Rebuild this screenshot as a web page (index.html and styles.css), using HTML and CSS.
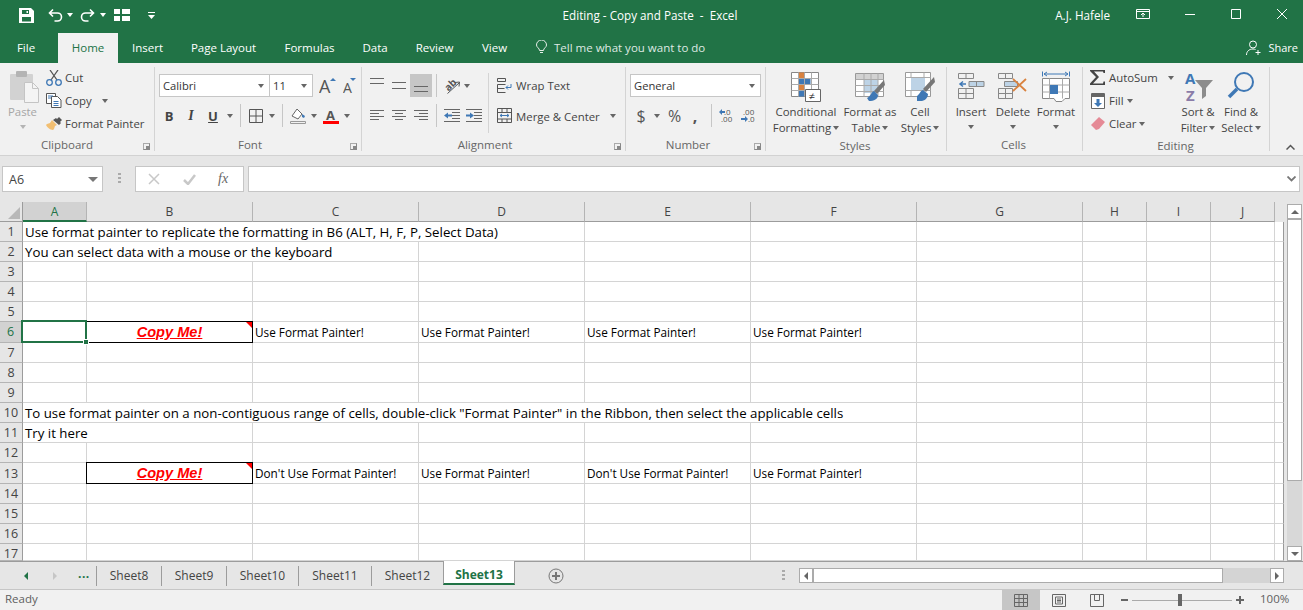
FILE: index.html
```html
<!DOCTYPE html>
<html lang="en">
<head>
<meta charset="utf-8">
<title>Editing - Copy and Paste - Excel</title>
<link rel="stylesheet" href="styles.css">
</head>
<body>
<div class="app">
  <header class="titlebar">
    <div class="qat">
      <svg class="m19" width="15" height="15" viewBox="0 0 15 15"><path d="M0 0h12l3 3v12H0z" fill="#fff"/><path d="M3 2h7v4H3zM3 9h9v4.500H3z" fill="#217346"/><path d="M7.500 3h1.500v2H7.500z" fill="#fff"/></svg>
      <svg class="m14" width="15" height="15" viewBox="0 0 15 15" fill="none" stroke="#fff" stroke-width="1.600"><path d="M5 1.500 1.500 5 5 8.500M2 5h7.500a3.800 3.800 0 0 1 0 8H6.500"/></svg>
      <span class="caret white m4"></span>
      <svg class="m7" width="15" height="15" viewBox="0 0 15 15" fill="none" stroke="#fff" stroke-width="1.600"><path d="M10 1.500 13.500 5 10 8.500M13 5H5.500a3.800 3.800 0 0 0 0 8H8.500"/></svg>
      <span class="caret white m5"></span>
      <svg class="m8" width="16" height="12" viewBox="0 0 16 12" fill="#fff"><path d="M0 0h6v5H0zM8 0h8v5H8zM0 7h6v5H0zM8 7h8v5H8z"/></svg>
      <svg class="m18" width="7" height="7" viewBox="0 0 7 7" fill="#fff"><path d="M0 0h7v1H0zM0 3h7L3.500 7z"/></svg>
    </div>
    <div class="doc-title">Editing - Copy and Paste&nbsp; -&nbsp; Excel</div>
    <div class="win">
      <span class="user">A.J. Hafele</span>
      <svg width="14" height="10" viewBox="0 0 14 10" fill="none" stroke="#fff"><path d="M.5.500h13v9H.5zM.5 2.500h13M7 8V4M5 6l2-2 2 2"/></svg>
      <svg class="m35" width="10" height="10" viewBox="0 0 10 10" stroke="#fff"><path d="M0 5.500h10"/></svg>
      <svg class="m36" width="10" height="10" viewBox="0 0 10 10" fill="none" stroke="#fff"><path d="M.5.500h9v9h-9z"/></svg>
      <svg class="m36" width="10" height="10" viewBox="0 0 10 10" fill="none" stroke="#fff"><path d="M0 0l10 10M10 0 0 10"/></svg>
    </div>
  </header>

  <nav class="tabs">
    <span class="tab file">File</span>
    <span class="tab home">Home</span>
    <span class="tab t-insert">Insert</span>
    <span class="tab t-gap t65">Page Layout</span>
    <span class="tab t-gap t49">Formulas</span>
    <span class="tab t-gap t24">Data</span>
    <span class="tab t-gap t37">Review</span>
    <span class="tab t-gap t25">View</span>
    <svg class="bulb" width="11" height="14" viewBox="0 0 11 14" fill="none" stroke="#e6efe9"><path d="M3.500 10.500C3.500 8 .5 7.500.5 5a5 5 0 0 1 10 0c0 2.500-3 3-3 5.500zM4 12.500h3"/></svg>
    <span class="tell">Tell me what you want to do</span>
    <span class="share">
      <svg width="16" height="16" viewBox="0 0 16 16" fill="none" stroke="#fff"><circle cx="7" cy="4.500" r="3.500"/><path d="M.5 15c0-3.500 2.500-6 6.500-6 1 0 1.800.2 2.500.5M12 10v5M9.500 12.500h5"/></svg>
      Share
    </span>
  </nav>

  <section class="ribbon">
    <div class="group g-clip">
      <div class="body">
        <div class="big paste">
          <svg width="29" height="33" viewBox="0 0 29 33"><rect x="0" y="4" width="23" height="26" rx="1" fill="#d2d2d2"/><rect x="6" y="1" width="11" height="6" rx="1" fill="#b4b4b4"/><path d="M14.500 12.500h8l6 6v14h-14z" fill="#f4f4f4" stroke="#c4c4c4"/><path d="M22.500 12.500v6h6" fill="none" stroke="#c4c4c4"/></svg>
          <span class="lbl dim">Paste</span>
          <span class="caret dimc"></span>
        </div>
        <div class="smalls">
          <div class="small">
            <svg width="16" height="16" viewBox="0 0 16 16" fill="none"><path d="M4 0l7 10M12 0 5 10" stroke="#555" stroke-width="1.300"/><circle cx="3.500" cy="12.500" r="2.800" stroke="#3f78b5" stroke-width="1.300"/><circle cx="12.500" cy="12.500" r="2.800" stroke="#3f78b5" stroke-width="1.300"/></svg>
            <span>Cut</span>
          </div>
          <div class="small">
            <svg width="16" height="15" viewBox="0 0 16 15" fill="#fff" stroke="#555"><path d="M.5.500h9v10h-9z"/><path d="M5.500 3.500h6l3.500 3.500v7.500H5.500z"/><path d="M2 3h5M2 5h3M7.500 8.500h5M7.500 10.500h5M7.500 12.500h5" stroke="#3f78b5"/></svg>
            <span>Copy</span>
            <span class="caret m10"></span>
          </div>
          <div class="small">
            <svg width="16" height="14" viewBox="0 0 16 14"><path d="M6 3l5 5-2 1-1 3-1 1C4 13 1 10 0 8l1-1 3-1z" fill="#f2bf72"/><path d="M7 3l3-2 1 1 2-2 3 3-2 2 1 1-2 2z" fill="#555"/></svg>
            <span>Format Painter</span>
          </div>
        </div>
      </div>
      <div class="glabel w-clip">Clipboard</div>
      <span class="launch"></span>
    </div>

    <div class="group g-font">
      <div class="body col">
        <div class="row r1 p4">
          <div class="combo w110"><span>Calibri</span><span class="caret"></span></div>
          <div class="combo w44"><span>11</span><span class="caret"></span></div>
          <span class="fs m6"><svg width="19" height="17" viewBox="0 0 19 17"><text x="0" y="16" class="svgA">A</text><path d="M11 4l3-3 3 3z" fill="#3f78b5"/></svg></span>
          <span class="fs m5"><svg width="14" height="17" viewBox="0 0 14 17"><text x="0" y="16" class="svgA small-a">A</text><path d="M7 1h6l-3 3z" fill="#3f78b5"/></svg></span>
        </div>
        <div class="row r2 p3">
          <span class="fb b">B</span><span class="fb i">I</span><span class="fb u">U</span>
          <span class="caret m3"></span>
          <span class="sep m7"></span>
          <svg class="m8" width="14" height="14" viewBox="0 0 14 14" fill="none" stroke="#555"><path d="M.5.500h13v13H.5zM7 .5v13M.5 7h13"/></svg>
          <span class="caret m6"></span>
          <span class="sep m7"></span>
          <svg class="m7" width="16" height="16" viewBox="0 0 16 16"><path d="M7 1l5 5-4 5-6-3z" fill="#fff" stroke="#666"/><path d="M12 6l3 2 -1 2-2-1z" fill="#3f78b5"/><path d="M.5 13.500h15v2H.5z" fill="#f1f1f1" stroke="#999"/></svg>
          <span class="caret m5"></span>
          <svg class="m6" width="16" height="16" viewBox="0 0 16 16"><text x="3" y="12" class="svgA c-a">A</text><path d="M0 13h16v3H0z" fill="#f00"/></svg>
          <span class="caret m5"></span>
        </div>
      </div>
      <div class="glabel w-font">Font</div>
      <span class="launch"></span>
    </div>

    <div class="group g-align">
      <div class="body">
        <div class="col a-left">
          <div class="row r1 p8">
            <svg width="14" height="22" viewBox="0 0 14 22" stroke="#666"><path d="M0 3.500h14M0 8.500h14"/></svg>
            <svg class="m8" width="14" height="22" viewBox="0 0 14 22" stroke="#666"><path d="M0 7.500h14M0 13.500h14"/></svg>
            <span class="pressed m4"><svg width="14" height="23" viewBox="0 0 14 23" stroke="#666"><path d="M0 12.500h14M0 17.500h14"/></svg></span>
            <span class="sep m4"></span>
            <svg class="m7" width="16" height="16" viewBox="0 0 16 16" fill="none"><text x="1" y="11" class="orient" transform="rotate(-45 6 8)">ab</text><path d="M3.500 15.500 15 5M11 4.500l4.500-.5-.5 4.500" stroke="#555"/></svg>
            <span class="caret m4"></span>
          </div>
          <div class="row r2 p8">
            <svg width="14" height="12" viewBox="0 0 14 12" stroke="#666"><path d="M0 .5h14M0 3.500h9M0 6.500h14M0 9.500h9"/></svg>
            <svg class="m8" width="14" height="12" viewBox="0 0 14 12" stroke="#666"><path d="M0 .5h14M3 3.500h8M0 6.500h14M3 9.500h8"/></svg>
            <svg class="m8" width="14" height="12" viewBox="0 0 14 12" stroke="#666"><path d="M0 .5h14M5 3.500h9M0 6.500h14M5 9.500h9"/></svg>
            <span class="sep m8"></span>
            <svg class="m7" width="16" height="13" viewBox="0 0 16 13" fill="none"><path d="M0 .5h16M8 3.500h8M8 6.500h8M8 9.500h8M0 12.500h16" stroke="#666"/><path d="M0 6.500l4-3v2h4v2H4v2z" fill="#3f78b5"/></svg>
            <svg class="m6" width="16" height="13" viewBox="0 0 16 13" fill="none"><path d="M0 .5h16M8 3.500h8M8 6.500h8M8 9.500h8M0 12.500h16" stroke="#666"/><path d="M8 6.500l-4-3v2H0v2h4v2z" fill="#3f78b5"/></svg>
          </div>
        </div>
        <div class="col a-right">
          <div class="row r1">
            <svg width="15" height="15" viewBox="0 0 15 15" fill="none" stroke="#555"><path d="M.5.500h8v3h-8zM.5 6.500h8M.5 10.500h7M.5 14.500h8M.5 6.500v8"/><path d="M14 6v3.500H9M11 7.500l-2 2 2 2" stroke="#3f78b5"/></svg>
            <span class="rtext">Wrap Text</span>
          </div>
          <div class="row r2">
            <svg width="15" height="15" viewBox="0 0 15 15" fill="none" stroke="#555"><path d="M.5.500h14v14H.5zM.5 4.500h14M.5 11h14M5 .5v4M10 .5v4M5 11v3.500M10 11v3.500"/><path d="M3 7.500h9M5 6 3 7.500 5 9M10 6l2 1.500L10 9" stroke="#3f78b5"/></svg>
            <span class="rtext">Merge &amp; Center</span>
            <span class="caret m10"></span>
          </div>
        </div>
      </div>
      <div class="glabel w-align">Alignment</div>
      <span class="launch"></span>
    </div>

    <div class="group g-num">
      <div class="body col">
        <div class="row r1 p4">
          <div class="combo w131"><span>General</span><span class="caret"></span></div>
        </div>
        <div class="row r2 p8">
          <span class="nb w14">$</span>
          <span class="caret m6"></span>
          <span class="nb w17 m6">%</span>
          <span class="nb w12 m6 comma">,</span>
          <span class="sep m10"></span>
          <svg class="m7" width="14" height="15" viewBox="0 0 14 15"><text x="5" y="7" class="dec">.0</text><text x="2" y="14" class="dec">.00</text><path d="M0 4l3-3v2h3v2H3v2z" fill="#3f78b5"/></svg>
          <svg class="m8" width="14" height="15" viewBox="0 0 14 15"><text x="2" y="7" class="dec">.00</text><text x="7" y="14" class="dec">.0</text><path d="M7 11 4 8v2H0v2h4v2z" fill="#3f78b5"/></svg>
        </div>
      </div>
      <div class="glabel w-num">Number</div>
      <span class="launch"></span>
    </div>

    <div class="group g-styles">
      <div class="body">
        <div class="big w72">
          <svg class="bigicon" width="30" height="31" viewBox="0 0 30 31" fill="none"><path d="M.5 1.500h27v24H.5z" fill="#fff" stroke="#888"/><path d="M7.500 1.500h6v6h-6zM7.500 13.500h6v6h-6z" fill="#d9823f"/><path d="M7.500 7.500h12v6h-12zM7.500 19.500h6v6h-6z" fill="#3f78b5"/><path d="M7.500 1.500v24M13.500 1.500v24M20.500 1.500v24M.5 7.500h27M.5 13.500h27M.5 19.500h27" stroke="#aaa"/><path d="M14.500 18.500h15v12h-15z" fill="#fff" stroke="#666"/><text x="17.500" y="29" class="neq">≠</text></svg>
          <span class="lbl">Conditional</span>
          <span class="lbl">Formatting <span class="caret inline"></span></span>
        </div>
        <div class="big w56">
          <svg class="bigicon" width="30" height="31" viewBox="0 0 30 31" fill="none"><path d="M.5 2.500h28v23H.5z" fill="#fff" stroke="#999"/><path d="M1 3h27v5H1z" fill="#d2d2d2"/><path d="M9 8h14v14H9z" fill="#bdd3e6"/><path d="M.5 8.500h28M.5 14.500h28M.5 20.500h28M9 2.500v23M16 2.500v23M23 2.500v23" stroke="#aaa"/><path d="M29 9 19 20l3 3 8-9z" fill="#777"/><path d="M19 20c-3 1-3 5-7 7l2 3c5 0 9-2 9-6z" fill="#3f78b5"/></svg>
          <span class="lbl">Format as</span>
          <span class="lbl">Table <span class="caret inline"></span></span>
        </div>
        <div class="big w44">
          <svg class="bigicon" width="30" height="31" viewBox="0 0 30 31" fill="none"><path d="M.5 1.500h25v24H.5z" fill="#fff" stroke="#999"/><path d="M.5 6.500h25M.5 19.500h25M6 1.500v5M19 1.500v5M6 19.500v6" stroke="#aaa"/><path d="M6 7h14v12H6z" fill="#bdd3e6"/><path d="M29 6 18 18l3 3 9-10z" fill="#777"/><path d="M18 19c-3 1-3 4-6 6v5h5c4-1 6-4 6-7z" fill="#3f78b5"/></svg>
          <span class="lbl">Cell</span>
          <span class="lbl">Styles <span class="caret inline"></span></span>
        </div>
      </div>
      <div class="glabel">Styles</div>
    </div>

    <div class="group g-cells">
      <div class="body">
        <div class="big w42">
          <svg class="bigicon" width="27" height="31" viewBox="0 0 27 31" fill="none"><path d="M.5 2.500h15v5H.5zM8 2.500v5M.5 17.500h15v10H.5zM.5 22.500h15M8 17.500v10" stroke="#888"/><path d="M11 10.500h15v5H11zM18.500 10.500v5" fill="#bdd3e6" stroke="#888"/><path d="M8 13H3M5 10.500 2 13l3 2.500" stroke="#3f78b5" stroke-width="1.500"/></svg>
          <span class="lbl">Insert</span>
          <span class="caret lone"></span>
        </div>
        <div class="big w42">
          <svg class="bigicon" width="30" height="31" viewBox="0 0 30 31" fill="none"><path d="M.5 2.500h14v5H.5zM7.500 2.500v5M.5 17.500h14v10H.5zM.5 22.500h14M7.500 17.500v10" stroke="#888"/><path d="M6.500 10.500h13v5h-13z" fill="#bdd3e6" stroke="#888"/><path d="M15 8l13 12M28 8 15 20" stroke="#d9823f" stroke-width="1.800"/></svg>
          <span class="lbl">Delete</span>
          <span class="caret lone"></span>
        </div>
        <div class="big w44">
          <svg class="bigicon" width="28" height="31" viewBox="0 0 28 31" fill="none"><path d="M.5.500v5M27.500.5v5M2 3h24M5 1l-3 2 3 2M23 1l3 2-3 2" stroke="#3f78b5"/><path d="M.5 7.500h27v20H23l-3 3h-6l-2-3H.5z" fill="#fff" stroke="#888"/><path d="M.5 14h27M.5 21h27M7.500 7.500v20M20.500 7.500v20" stroke="#aaa"/><path d="M8 14h8v9H8z" fill="#3f78b5"/></svg>
          <span class="lbl">Format</span>
          <span class="caret lone"></span>
        </div>
      </div>
      <div class="glabel">Cells</div>
    </div>

    <div class="group g-edit">
      <div class="body">
        <div class="smalls w87">
          <div class="small">
            <svg width="16" height="15" viewBox="0 0 16 15"><path d="M0 0h15v3h-1.500L13 1.500H4l5 5.500-6 6.500h10l.5-2H15v3.500H0v-1.500l6-6.500L0 1z" fill="#444"/></svg>
            <span>AutoSum</span>
            <span class="caret m10"></span>
          </div>
          <div class="small narrow">
            <svg width="14" height="16" viewBox="0 0 14 16" fill="none"><path d="M.5.500h13v15H.5z" fill="#fff" stroke="#666"/><path d="M1 1h12v3H1z" fill="#666"/><path d="M5.500 6h3v4H11l-4 4-4-4h2.500z" fill="#3f78b5"/></svg>
            <span>Fill</span>
            <span class="caret m3"></span>
          </div>
          <div class="small narrow">
            <svg width="14" height="13" viewBox="0 0 14 13"><path d="M8 0l6 5-6 7-3 1-5-5z" fill="#e58a96"/></svg>
            <span>Clear</span>
            <span class="caret m3"></span>
          </div>
        </div>
        <div class="big w42">
          <svg class="bigicon" width="31" height="31" viewBox="0 0 31 31"><text x="2" y="13" class="sort-a">A</text><text x="3" y="30" class="sort-z">Z</text><path d="M12 9h18l-7 8v8l-4 3V17z" fill="#8c8c8c"/></svg>
          <span class="lbl">Sort &amp;</span>
          <span class="lbl">Filter <span class="caret inline"></span></span>
        </div>
        <div class="big w44">
          <svg class="bigicon" width="28" height="31" viewBox="0 0 28 31" fill="none"><circle cx="17" cy="11" r="9" stroke="#3f78b5" stroke-width="2"/><path d="M10 18 2 26" stroke="#3f78b5" stroke-width="3.500"/></svg>
          <span class="lbl">Find &amp;</span>
          <span class="lbl">Select <span class="caret inline"></span></span>
        </div>
      </div>
      <div class="glabel">Editing</div>
    </div>

    <svg class="collapse" width="9" height="6" viewBox="0 0 9 6" fill="none" stroke="#555" stroke-width="1.500"><path d="M.5 5.500l4-4 4 4"/></svg>
  </section>

  <section class="fbar">
    <div class="namebox"><span>A6</span><span class="caret big-caret"></span></div>
    <svg class="vdots" width="3" height="11" viewBox="0 0 3 11" fill="#aaa"><path d="M0 0h3v2H0zM0 4h3v2H0zM0 8h3v2H0z"/></svg>
    <div class="fbtns">
      <svg width="12" height="12" viewBox="0 0 12 12" stroke="#c8c8c8" stroke-width="1.500"><path d="M1 1l10 10M11 1 1 11"/></svg>
      <svg width="13" height="11" viewBox="0 0 13 11" fill="none" stroke="#c8c8c8" stroke-width="2.500"><path d="M1 6l4 4 7-9"/></svg>
      <span class="fx">fx</span>
    </div>
    <div class="finput"><svg width="9" height="6" viewBox="0 0 9 6" fill="none" stroke="#777" stroke-width="1.800"><path d="M.5.500l4 4 4-4"/></svg></div>
  </section>

  <main class="sheet">
    <div class="grid">
      <div class="ch corner"><span class="tri"></span></div><div class="ch active">A</div><div class="ch">B</div><div class="ch">C</div><div class="ch">D</div><div class="ch">E</div><div class="ch">F</div><div class="ch">G</div><div class="ch">H</div><div class="ch">I</div><div class="ch">J</div><div class="ch end"></div>

      <div class="rh">1</div><div class="c span4">Use format painter to replicate the formatting in B6 (ALT, H, F, P, Select Data)</div><div class="c"></div><div class="c"></div><div class="c"></div><div class="c"></div><div class="c"></div><div class="c"></div><div class="c end"></div>
      <div class="rh">2</div><div class="c span3">You can select data with a mouse or the keyboard</div><div class="c"></div><div class="c"></div><div class="c"></div><div class="c"></div><div class="c"></div><div class="c"></div><div class="c"></div><div class="c end"></div>
      <div class="rh">3</div><div class="c"></div><div class="c"></div><div class="c"></div><div class="c"></div><div class="c"></div><div class="c"></div><div class="c"></div><div class="c"></div><div class="c"></div><div class="c"></div><div class="c end"></div>
      <div class="rh">4</div><div class="c"></div><div class="c"></div><div class="c"></div><div class="c"></div><div class="c"></div><div class="c"></div><div class="c"></div><div class="c"></div><div class="c"></div><div class="c"></div><div class="c end"></div>
      <div class="rh">5</div><div class="c"></div><div class="c"></div><div class="c"></div><div class="c"></div><div class="c"></div><div class="c"></div><div class="c"></div><div class="c"></div><div class="c"></div><div class="c"></div><div class="c end"></div>
      <div class="rh active">6</div><div class="c sel"><span class="handle"></span></div><div class="c copy no-left">Copy Me!<span class="note"></span></div><div class="c ufp">Use Format Painter!</div><div class="c ufp">Use Format Painter!</div><div class="c ufp">Use Format Painter!</div><div class="c ufp">Use Format Painter!</div><div class="c"></div><div class="c"></div><div class="c"></div><div class="c"></div><div class="c end"></div>
      <div class="rh">7</div><div class="c"></div><div class="c"></div><div class="c"></div><div class="c"></div><div class="c"></div><div class="c"></div><div class="c"></div><div class="c"></div><div class="c"></div><div class="c"></div><div class="c end"></div>
      <div class="rh">8</div><div class="c"></div><div class="c"></div><div class="c"></div><div class="c"></div><div class="c"></div><div class="c"></div><div class="c"></div><div class="c"></div><div class="c"></div><div class="c"></div><div class="c end"></div>
      <div class="rh">9</div><div class="c"></div><div class="c"></div><div class="c"></div><div class="c"></div><div class="c"></div><div class="c"></div><div class="c"></div><div class="c"></div><div class="c"></div><div class="c"></div><div class="c end"></div>
      <div class="rh">10</div><div class="c span6">To use format painter on a non-contiguous range of cells, double-click "Format Painter" in the Ribbon, then select the applicable cells</div><div class="c"></div><div class="c"></div><div class="c"></div><div class="c"></div><div class="c end"></div>
      <div class="rh">11</div><div class="c span2">Try it here</div><div class="c"></div><div class="c"></div><div class="c"></div><div class="c"></div><div class="c"></div><div class="c"></div><div class="c"></div><div class="c"></div><div class="c end"></div>
      <div class="rh">12</div><div class="c"></div><div class="c"></div><div class="c"></div><div class="c"></div><div class="c"></div><div class="c"></div><div class="c"></div><div class="c"></div><div class="c"></div><div class="c"></div><div class="c end"></div>
      <div class="rh tall">13</div><div class="c"></div><div class="c copy">Copy Me!<span class="note"></span></div><div class="c ufp">Don't Use Format Painter!</div><div class="c ufp">Use Format Painter!</div><div class="c ufp">Don't Use Format Painter!</div><div class="c ufp">Use Format Painter!</div><div class="c"></div><div class="c"></div><div class="c"></div><div class="c"></div><div class="c end"></div>
      <div class="rh">14</div><div class="c"></div><div class="c"></div><div class="c"></div><div class="c"></div><div class="c"></div><div class="c"></div><div class="c"></div><div class="c"></div><div class="c"></div><div class="c"></div><div class="c end"></div>
      <div class="rh">15</div><div class="c"></div><div class="c"></div><div class="c"></div><div class="c"></div><div class="c"></div><div class="c"></div><div class="c"></div><div class="c"></div><div class="c"></div><div class="c"></div><div class="c end"></div>
      <div class="rh">16</div><div class="c"></div><div class="c"></div><div class="c"></div><div class="c"></div><div class="c"></div><div class="c"></div><div class="c"></div><div class="c"></div><div class="c"></div><div class="c"></div><div class="c end"></div>
      <div class="rh">17</div><div class="c"></div><div class="c"></div><div class="c"></div><div class="c"></div><div class="c"></div><div class="c"></div><div class="c"></div><div class="c"></div><div class="c"></div><div class="c"></div><div class="c end"></div>
    </div>
    <div class="vscroll">
      <span class="sbtn"><span class="tri-up"></span></span>
      <span class="vthumb"></span>
      <span class="vtrack"></span>
      <span class="sbtn"><span class="tri-down"></span></span>
    </div>
  </main>

  <section class="tabbar">
    <span class="nav-l"></span>
    <span class="nav-r"></span>
    <span class="more">...</span>
    <span class="stab first s66">Sheet8</span>
    <span class="stab s65">Sheet9</span>
    <span class="stab s72">Sheet10</span>
    <span class="stab s73">Sheet11</span>
    <span class="stab last s71">Sheet12</span>
    <span class="stab on">Sheet13</span>
    <svg class="plus" width="16" height="16" viewBox="0 0 16 16" fill="none" stroke="#777"><circle cx="8" cy="8" r="7"/><path d="M8 4v8M4 8h8" stroke-width="2"/></svg>
    <svg class="hdots" width="3" height="11" viewBox="0 0 3 11" fill="#aaa"><path d="M0 0h3v2H0zM0 4h3v2H0zM0 8h3v2H0z"/></svg>
    <div class="hscroll">
      <span class="hbtn"><span class="tri-left"></span></span>
      <span class="hthumb"></span>
      <span class="htrack"></span>
      <span class="hbtn"><span class="tri-right"></span></span>
    </div>
  </section>

  <footer class="status">
    <span class="ready">Ready</span>
    <span class="view on"><svg width="14" height="13" viewBox="0 0 14 13" fill="none" stroke="#666"><path d="M.5.500h13v12H.5zM.5 4.500h13M.5 8.500h13M5 .5v12M9.500.5v12"/></svg></span>
    <span class="view"><svg width="14" height="13" viewBox="0 0 14 13" fill="none" stroke="#666"><path d="M.5.500h13v12H.5zM3.500 3h7v7h-7zM5 5h4M5 6.500h4M5 8h4"/></svg></span>
    <span class="view"><svg width="14" height="13" viewBox="0 0 14 13" fill="none" stroke="#666"><path d="M.5.500h13v12H.5zM4.500.5v6h5v-6"/></svg></span>
    <span class="minus"></span>
    <span class="slider"><span class="knob"></span></span>
    <span class="zplus"></span>
    <span class="pct">100%</span>
  </footer>
</div>
</body>
</html>
```
FILE: styles.css
```css
* { box-sizing: border-box; }
html, body { margin: 0; padding: 0; }
body { font-family: "Open Sans", "Noto Sans", sans-serif; font-size: 11.400px; color: #444; overflow: hidden; }
svg { display: block; flex: none; }
.app { width: 1303px; height: 610px; display: flex; flex-direction: column; overflow: hidden; background: #e6e6e6; }

.m3 { margin-left: 3px; } .m4 { margin-left: 4px; } .m5 { margin-left: 5px; } .m6 { margin-left: 6px; }
.m7 { margin-left: 7px; } .m8 { margin-left: 8px; } .m10 { margin-left: 10px; } .m14 { margin-left: 14px; }
.m18 { margin-left: 18px; } .m19 { margin-left: 19px; } .m35 { margin-left: 35px; } .m36 { margin-left: 36px; }

.caret { display: inline-block; flex: none; width: 0; height: 0; border-left: 3.500px solid transparent; border-right: 3.500px solid transparent; border-top: 4px solid #666; }
.caret.white { border-top-color: #fff; }
.caret.dimc { border-top-color: #b4b4b4; }
.caret.inline { vertical-align: 2px; margin-left: -1px; }
.caret.big-caret { border-left-width: 5px; border-right-width: 5px; border-top-width: 5px; border-top-color: #777; }

/* title bar */
.titlebar { height: 33px; padding-bottom: 3px; background: #217346; color: #fff; display: flex; align-items: center; justify-content: space-between; position: relative; flex: none; }
.qat { display: flex; align-items: center; width: 161px; }
.doc-title { position: absolute; left: 0; right: 3px; text-align: center; font-size: 11.700px; }
.win { display: flex; align-items: center; padding-right: 16px; }
.win svg { margin-bottom: 2px; }
.user { margin-right: 26px; font-size: 11.700px; }

/* tabs */
.tabs { height: 30px; background: #217346; color: #fff; display: flex; align-items: flex-end; flex: none; position: relative; font-size: 11.500px; }
.tab { height: 30px; padding-bottom: 1px; display: flex; align-items: center; justify-content: center; white-space: nowrap; }
.file { margin-left: 17px; width: 18px; }
.home { margin-left: 23px; width: 60px; background: #f1f1f1; color: #217346; }
.t-insert { margin-left: 15px; width: 29px; }
.t-gap { margin-left: 29px; }
.t65 { width: 65px; } .t49 { width: 49px; } .t24 { width: 24px; } .t37 { width: 37px; } .t25 { width: 25px; }
.bulb { margin-left: 29px; margin-bottom: 9px; }
.tell { margin-left: 7px; height: 30px; padding-bottom: 1px; display: flex; align-items: center; color: #dfe9e3; }
.share { margin-left: auto; margin-right: 5px; height: 30px; padding-bottom: 1px; display: flex; align-items: center; gap: 6px; font-size: 11px; }

/* ribbon */
.ribbon { height: 93px; flex: none; background: #f1f1f1; border-bottom: 1px solid #d2d2d2; padding-top: 4px; display: flex; position: relative; }
.group { height: 84px; flex: none; border-right: 1px solid #d4d4d4; display: flex; flex-direction: column; position: relative; }
.body { height: 71px; display: flex; }
.col { display: flex; flex-direction: column; }
.glabel { height: 13px; line-height: 13px; margin-top: 3px; text-align: center; color: #666; font-size: 11.500px; }
.w-clip { width: 134px; }
.w-font { width: 190px; }
.w-align { width: 246px; }
.w-num { width: 124px; }
.launch { position: absolute; right: 4px; bottom: 1px; width: 7px; height: 7px; border: 1px solid #888; border-top-color: #aaa; border-left-color: #aaa; }
.launch::after { content: ""; position: absolute; right: 0; bottom: 0; width: 3px; height: 3px; background: #888; }
.g-clip { width: 155px; } .g-font { width: 207px; } .g-align { width: 264px; } .g-num { width: 140px; }
.g-styles { width: 181px; padding-left: 0; } .g-cells { width: 136px; } .g-edit { width: 187px; }
.g-styles .body { padding-left: 4px; } .g-cells .body { padding-left: 3px; } .g-edit .body { padding-left: 7px; }
.g-styles .glabel { width: 178px; } .g-cells .glabel { width: 133px; } .g-edit .glabel { width: 185px; }

.big { display: flex; flex-direction: column; align-items: center; flex: none; white-space: nowrap; }
.paste { width: 45px; padding-top: 3px; }
.paste svg { margin-left: 3px; margin-bottom: 0; }
.bigicon { margin-top: 4px; margin-bottom: 2px; }
.lbl { height: 16px; line-height: 16px; }
.paste .lbl { margin-top: 1px; }
.paste .caret { margin-top: 5px; }
.lone { margin-top: 5px; }
.dim { color: #a6a6a6; }
.w72 { width: 72px; } .w56 { width: 56px; } .w44 { width: 44px; } .w42 { width: 42px; } .w87 { width: 87px; }
.smalls { display: flex; flex-direction: column; gap: 2px; margin-left: 1px; }
.small { height: 21px; display: flex; align-items: center; white-space: nowrap; }
.small svg { margin-right: 3px; }
.small.narrow svg { margin-left: 1px; margin-right: 4px; }
.w87.smalls { margin-left: 0; }

.row { display: flex; align-items: center; }
.r1 { height: 23px; margin-top: 7px; }
.r2 { height: 23px; margin-top: 7px; }
.p3 { padding-left: 3px; } .p4 { padding-left: 4px; } .p8 { padding-left: 8px; }
.combo { height: 23px; background: #fff; border: 1px solid #c6c6c6; display: flex; align-items: center; justify-content: space-between; padding: 0 5px 0 3px; color: #333; font-size: 11.200px; }
.w110 { width: 111px; } .w131 { width: 131px; }
.combo.w44 { width: 44px; margin-left: -1px; }
.fb { width: 22px; text-align: center; font-size: 13px; color: #444; }
.b { font-weight: 700; font-family: "Open Sans", sans-serif; }
.i { font-style: italic; font-family: "Liberation Serif", serif; font-size: 14px; font-weight: 700; }
.u { text-decoration: underline; font-weight: 700; }
.sep { width: 1px; height: 23px; background: #c6c6c6; flex: none; }
.svgA { font-family: "Open Sans", sans-serif; font-size: 18px; fill: #555; }
.small-a { font-size: 14px; }
.c-a { font-size: 13px; font-weight: 700; }
.orient { font-family: "Open Sans", sans-serif; font-size: 10px; font-weight: 700; fill: #555; }
.pressed { width: 22px; height: 23px; background: #c6c6c6; display: flex; align-items: center; justify-content: center; flex: none; }
.a-left { width: 127px; border-right: 1px solid #d4d4d4; height: 60px; margin-top: 6px; }
.a-left .r1, .a-left .r2 { margin-top: 1px; }
.a-left .r2 { margin-top: 7px; }
.a-right { padding-left: 8px; }
.rtext { margin-left: 4px; white-space: nowrap; }
.r2 .rtext { margin-top: 2px; }
.nb { text-align: center; font-size: 16px; color: #555; flex: none; }
.w14 { width: 14px; } .w17 { width: 17px; } .w12 { width: 12px; }
.comma { font-weight: 700; }
.dec { font-size: 8px; fill: #555; font-family: "Open Sans", sans-serif; }
.neq { font-size: 11px; fill: #333; font-family: "Open Sans", sans-serif; }
.sort-a { font-size: 15px; font-weight: 700; fill: #3f78b5; font-family: "Open Sans", sans-serif; }
.sort-z { font-size: 15px; font-weight: 700; fill: #8a7ca8; font-family: "Open Sans", sans-serif; }
.collapse { position: absolute; left: 1286px; top: 81px; }

/* formula bar */
.fbar { height: 46px; flex: none; display: flex; padding-top: 10px; background: #e6e6e6; }
.namebox { margin-left: 2px; width: 101px; height: 26px; background: #fff; border: 1px solid #c6c6c6; display: flex; align-items: center; justify-content: space-between; padding: 0 4px 0 6px; font-size: 12.500px; }
.vdots { margin: 7px 0 0 15px; }
.fbtns { margin-left: 14px; width: 109px; height: 26px; background: #fff; border: 1px solid #c6c6c6; display: flex; align-items: center; padding-left: 12px; gap: 23px; }
.fx { font-family: "Liberation Serif", serif; font-style: italic; font-size: 14px; color: #666; margin-left: -1px; }
.finput { margin-left: 4px; width: 1052px; height: 26px; background: #fff; border: 1px solid #c6c6c6; display: flex; align-items: center; justify-content: flex-end; padding-right: 3px; }

/* sheet */
.sheet { height: 359px; flex: none; display: flex; }
.grid { width: 1284px; height: 359px; overflow: hidden; display: grid; background: #fff;
  grid-template-columns: 23px 64px 166px 166px 166px 166px 166px 166px 64px 64px 64px 9px;
  grid-template-rows: 20px repeat(5, 20px) 21px repeat(6, 20px) 21px repeat(3, 20px) 17px;
  font-family: "Open Sans", sans-serif; font-size: 13.270px; color: #000; }
.ch { background: #e6e6e6; border-right: 1px solid #b4b4b4; border-bottom: 1px solid #9c9c9c; text-align: center; line-height: 19px; color: #444; font-size: 12px; }
.ch.active { background: #d2d2d2; color: #217346; border-bottom: 2px solid #217346; }
.ch.corner { position: relative; border-right-color: #9c9c9c; }
.ch.end { border-right: 0; border-bottom: 0; }
.tri { position: absolute; right: 2px; bottom: 2px; width: 0; height: 0; border-left: 12px solid transparent; border-bottom: 12px solid #b8b8b8; }
.rh { background: #e6e6e6; border-right: 1px solid #9c9c9c; border-bottom: 1px solid #b4b4b4; text-align: center; line-height: 20px; color: #444; font-size: 12.500px; }
.rh.tall { line-height: 21px; }
.rh.active { background: #d2d2d2; color: #217346; border-right: 2px solid #217346; }
.c { border-right: 1px solid #d4d4d4; border-bottom: 1px solid #d4d4d4; padding-left: 2px; line-height: 20px; white-space: nowrap; position: relative; }
.c.end { border-right: 1px solid #999; }
.span2 { grid-column: span 2; } .span3 { grid-column: span 3; } .span4 { grid-column: span 4; } .span6 { grid-column: span 6; }
.ufp { font-size: 11.750px; line-height: 21px; }
.copy { text-align: center; font-family: "Liberation Sans", sans-serif; font-size: 14.600px; font-weight: 700; font-style: italic; text-decoration: underline; color: #f00; border-right-color: #000; border-bottom-color: #000; line-height: 20px; padding-left: 0; }
.copy::before { content: ""; position: absolute; left: -1px; top: -1px; right: -1px; bottom: -1px; border: 1px solid #000; }
.note { position: absolute; right: 0; top: 0; width: 0; height: 0; border-left: 6px solid transparent; border-top: 6px solid #f00; }
.sel { z-index: 2; }
.sel::after { content: ""; position: absolute; left: -2px; top: -2px; right: -1px; bottom: -1px; border: 2px solid #217346; }
.handle { position: absolute; right: -3px; bottom: -3px; width: 6px; height: 6px; background: #217346; border: 1px solid #fff; z-index: 1; }

.vscroll { width: 19px; height: 359px; display: flex; flex-direction: column; align-items: center; padding: 2px 1px 0 3px; background: #e6e6e6; }
.sbtn { width: 15px; height: 15px; flex: none; background: #fff; border: 1px solid #ababab; display: flex; align-items: center; justify-content: center; }
.vthumb { width: 15px; height: 262px; flex: none; background: #fff; border: 1px solid #ababab; }
.vtrack { width: 15px; flex: 1; background: #d8d8d8; }
.tri-up { width: 0; height: 0; border-left: 4px solid transparent; border-right: 4px solid transparent; border-bottom: 4px solid #666; }
.tri-down { width: 0; height: 0; border-left: 4px solid transparent; border-right: 4px solid transparent; border-top: 4px solid #666; }
.tri-left { width: 0; height: 0; border-top: 4px solid transparent; border-bottom: 4px solid transparent; border-right: 4px solid #666; }
.tri-right { width: 0; height: 0; border-top: 4px solid transparent; border-bottom: 4px solid transparent; border-left: 4px solid #666; }

/* sheet tabs */
.tabbar { height: 29px; flex: none; background: #e6e6e6; border-top: 1px solid #9c9c9c; border-bottom: 1px solid #c6c6c6; display: flex; align-items: flex-start; color: #444; font-size: 12px; }
.nav-l { width: 0; height: 0; margin: 10px 0 0 24px; border-top: 4px solid transparent; border-bottom: 4px solid transparent; border-right: 4px solid #217346; }
.nav-r { width: 0; height: 0; margin: 10px 0 0 25px; border-top: 4px solid transparent; border-bottom: 4px solid transparent; border-left: 4px solid #c6c6c6; }
.more { margin-left: 21px; width: 18px; font-weight: 700; color: #217346; line-height: 24px; letter-spacing: .5px; }
.stab { height: 20px; margin-top: 4px; line-height: 20px; text-align: center; border-right: 1px solid #9c9c9c; flex: none; }
.s66 { width: 66px; } .s65 { width: 65px; } .s72 { width: 72px; } .s73 { width: 73px; } .s71 { width: 71px; }
.stab.first { border-left: 1px solid #9c9c9c; }
.stab.last { border-right: 0; }
.stab.on { height: 24px; margin-top: -1px; width: 72px; line-height: 27px; background: #fff; color: #217346; font-weight: 700; border: 1px solid #9c9c9c; border-top: 0; border-bottom: 2px solid #217346; }
.plus { margin: 6px 0 0 33px; }
.hdots { margin: 8px 0 0 218px; }
.hscroll { margin: 6px 0 0 14px; width: 485px; height: 15px; display: flex; background: #d4d4d4; }
.hbtn { width: 14px; height: 15px; flex: none; background: #fff; border: 1px solid #ababab; display: flex; align-items: center; justify-content: center; }
.hthumb { width: 410px; height: 15px; flex: none; background: #fff; border: 1px solid #ababab; }
.htrack { flex: 1; }

/* status */
.status { height: 20px; flex: none; background: #f1f1f1; display: flex; align-items: center; position: relative; color: #5f5f5f; }
.ready { margin-left: 5px; margin-bottom: 3px; font-size: 11.500px; width: 997px; }
.view { width: 38px; height: 20px; display: flex; align-items: center; justify-content: center; }
.view.on { background: #c6c6c6; }
.minus { width: 7px; height: 2px; margin-left: 5px; background: #666; }
.slider { width: 100px; height: 1px; margin-left: 4px; background: #aaa; position: relative; }
.knob { position: absolute; left: 46px; top: -6px; width: 4px; height: 12px; background: #666; }
.zplus { width: 8px; height: 8px; margin-left: 4px; background: linear-gradient(#666,#666) center/8px 2px no-repeat, linear-gradient(#666,#666) center/2px 8px no-repeat; }
.pct { margin-left: 16px; margin-bottom: 3px; font-size: 11.500px; }
```
